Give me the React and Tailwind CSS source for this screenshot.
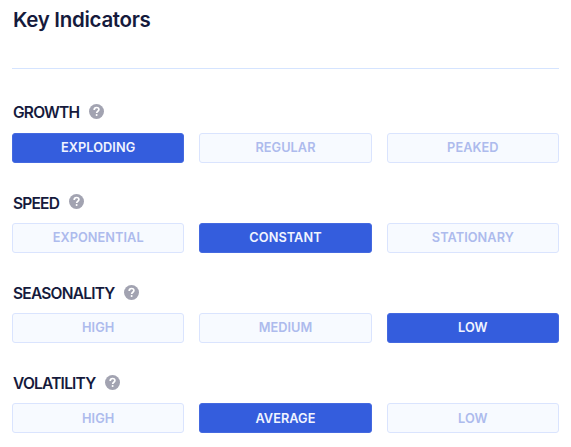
import React from 'react';
import clsx from 'clsx';

const indicators = [
  { name: 'Growth', levels: ['Exploding', 'Regular', 'Peaked'], active: 'Exploding' },
  { name: 'Speed', levels: ['Exponential', 'Constant', 'Stationary'], active: 'Constant' },
  { name: 'Seasonality', levels: ['High', 'Medium', 'Low'], active: 'Low' },
  { name: 'Volatility', levels: ['High', 'Average', 'Low'], active: 'Average' },
];

const HelpIcon = () => (
  <svg className="mb-0.5 h-[15px] w-[15px] shrink-0" viewBox="0 0 15 15" fill="none">
    <circle cx="7.5" cy="7.5" r="7.5" fill="#a2a3b1" />
    <path
      d="M5.2 5.9C5.2 4.4 6.2 3.5 7.6 3.5s2.3.8 2.3 2.1c0 1.6-2.2 1.7-2.2 3.3"
      stroke="#fff"
      strokeWidth="1.7"
    />
    <circle cx="7.6" cy="11.1" r="1" fill="#fff" />
  </svg>
);

const Level = ({ label, active }) => (
  <div
    className={clsx(
      'flex h-[30px] items-center justify-center rounded-[3px] border pt-[1.5px] text-[12.75px] leading-none font-semibold tracking-[0.05px] uppercase',
      active
        ? 'border-[#4469e0] bg-[#345ddd] text-[#f0f4ff]'
        : 'border-[#dae4fe] bg-[#f7faff] text-[#adbbed]'
    )}
  >
    {label}
  </div>
);

const Indicator = ({ name, levels, active }) => (
  <section>
    <div className="flex h-[18px] items-center gap-[9.5px] pl-px">
      <h2 className="pt-px text-[15.5px] leading-none font-semibold tracking-[-0.78px] text-[#151a3c] uppercase">
        {name}
      </h2>
      <HelpIcon />
    </div>
    <div className="mt-[11px] grid grid-cols-3 gap-[15px]">
      {levels.map((level) => (
        <Level key={level} label={level} active={level === active} />
      ))}
    </div>
  </section>
);

const App = () => (
  <main className="h-[447px] w-[571px] overflow-hidden bg-white px-3 pt-2 font-['Inter',sans-serif]">
    <h1 className="h-[61px] border-b border-[#d5e4ff] pl-px text-[20.5px] leading-6 font-semibold tracking-[-0.3px] text-[#151a3c]">
      Key Indicators
    </h1>
    <div className="mt-[34.5px] flex flex-col gap-[31.3px]">
      {indicators.map((item) => (
        <Indicator key={item.name} {...item} />
      ))}
    </div>
  </main>
);

export default App;
